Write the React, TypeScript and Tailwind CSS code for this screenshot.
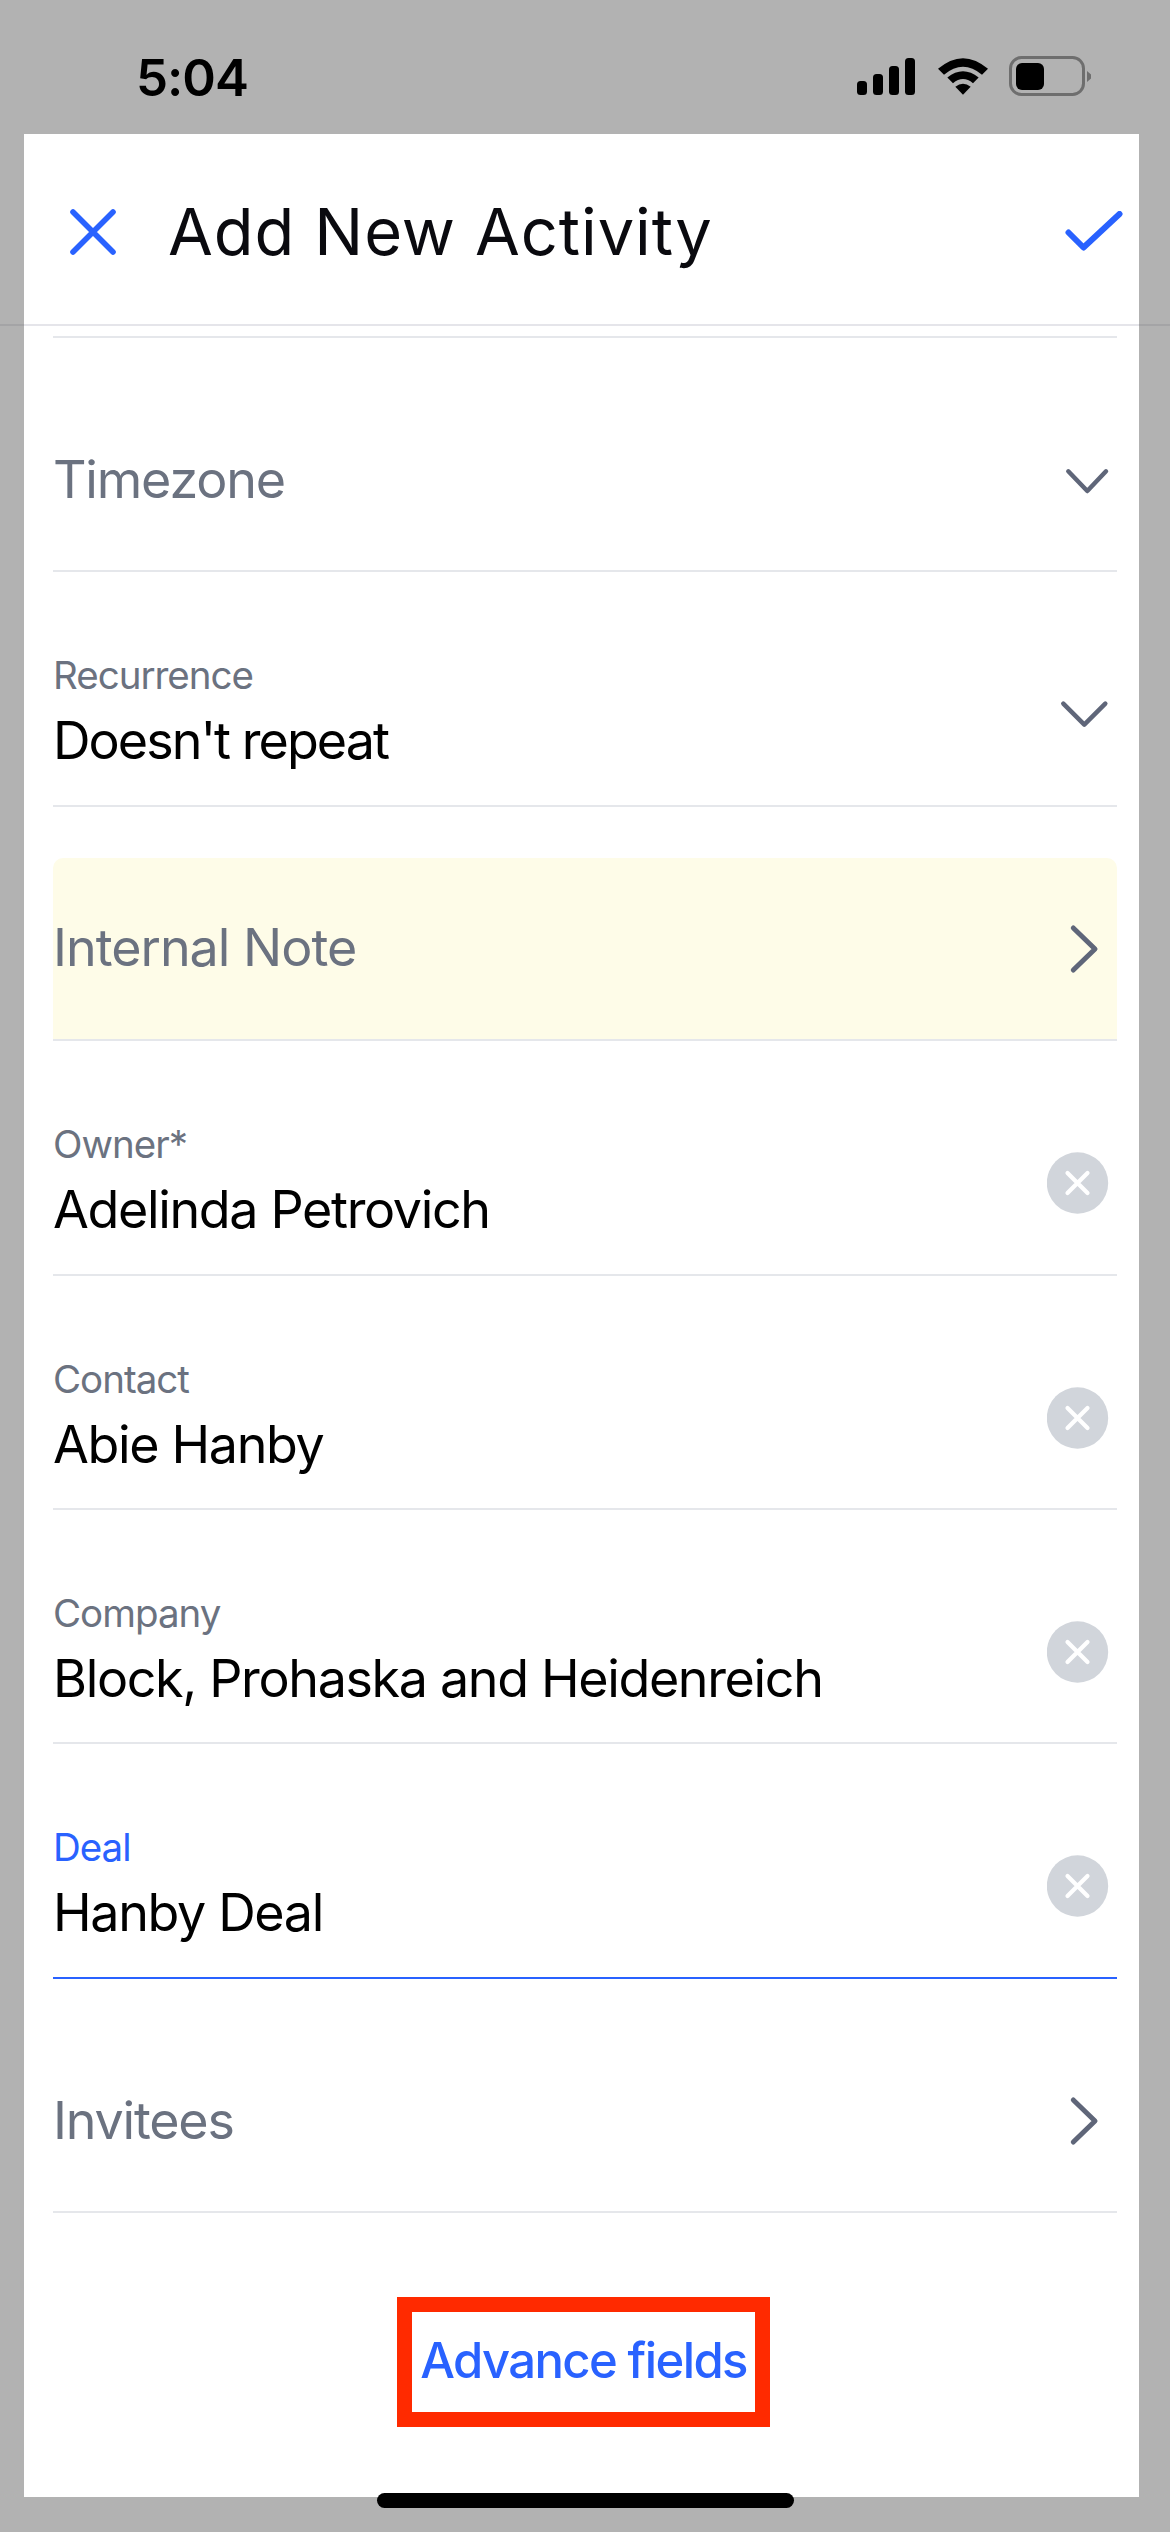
import React from "react";

const font = { fontFamily: "Inter, 'Noto Sans', sans-serif" };

function ChevronDown({ small }: { small?: boolean }) {
  return (
    <svg width="70" height="70" viewBox="0 0 70 70" fill="none" className="shrink-0 mt-[107px]">
      <path d={small ? "M21.3 26.3L40.3 46L59 26.3" : "M16.3 24.7L37.3 45.7L58.3 24.7"} stroke="#5f6679" strokeWidth="4.5" strokeLinecap="round" strokeLinejoin="round" />
    </svg>
  );
}

function ChevronRight() {
  return (
    <svg width="70" height="70" viewBox="0 0 70 70" fill="none" className="shrink-0 mt-[107px]">
      <path d="M26.3 14L48 35L26.3 56" stroke="#5f6679" strokeWidth="5" strokeLinecap="round" strokeLinejoin="round" />
    </svg>
  );
}

function Clear() {
  return (
    <svg width="70" height="70" viewBox="0 0 70 70" fill="none" className="shrink-0 mt-[107px]">
      <circle cx="30.5" cy="35" r="30.7" fill="#d1d5db" />
      <path d="M20.5 25L40.5 45M40.5 25L20.5 45" stroke="#ffffff" strokeWidth="4.2" strokeLinecap="round" />
    </svg>
  );
}

function FieldText({ label, value, focused, tight }: { label: string; value: string; focused?: boolean; tight?: boolean }) {
  return (
    <div className="flex flex-col pt-[79px]">
      <span className={`text-[38.5px] leading-[48px] tracking-[-1px] ${focused ? "text-[#2962ff]" : "text-[#6b7280]"}`}>{label}</span>
      <span className={`mt-[12px] text-[52px] leading-[60px] text-black ${tight ? "tracking-[-1.95px]" : "tracking-[-1.35px]"}`}>{value}</span>
    </div>
  );
}

function Field({ label, value, focused, tight, icon }: { label: string; value: string; focused?: boolean; tight?: boolean; icon: React.ReactNode }) {
  return (
    <div className={`flex h-[234.4px] items-start justify-between border-b-[2px] ${focused ? "border-[#2962ff]" : "border-[#e5e7eb]"}`}>
      <FieldText label={label} value={value} focused={focused} tight={tight} />
      {icon}
    </div>
  );
}

function Placeholder({ text, icon }: { text: string; icon: React.ReactNode }) {
  return (
    <div className="flex h-[234.4px] items-start justify-between border-b-[2px] border-[#e5e7eb]">
      <span className="pt-[112px] text-[52px] leading-[60px] tracking-[-1.2px] text-[#6b7280]">{text}</span>
      {icon}
    </div>
  );
}

export default function App() {
  return (
    <div style={font} className="relative h-[2532px] w-[1170px] overflow-hidden bg-[#b2b2b2]">
      <div className="absolute left-0 right-0 top-[324px] h-[2px] bg-[#a4a4a6]" />

      <div className="relative flex h-[134px] items-start justify-between pl-[136px] pr-[79px] pt-[48px]">
        <span className="text-[51px] font-semibold leading-[60px] tracking-[-1px] text-black">5:04</span>
        <div className="mt-[10px] flex items-start">
          <svg width="58" height="37" viewBox="0 0 58 37" fill="#000">
            <rect x="0" y="23" width="10" height="14" rx="3.5" />
            <rect x="16" y="16" width="10" height="21" rx="3.5" />
            <rect x="32" y="8" width="10" height="29" rx="3.5" />
            <rect x="48" y="0" width="10" height="37" rx="3.5" />
          </svg>
          <svg width="50" height="37" viewBox="0 0 150 110" fill="#000" className="ml-[23px]">
            <path d="M0 32Q75 -32 150 32L132 50Q75 2 18 50Z" />
            <path d="M28 58Q75 20 122 58L105 75Q75 50 45 75Z" />
            <path d="M52 86Q75 68 98 86L75 110Z" />
          </svg>
          <svg width="82" height="41" viewBox="0 0 82 41" fill="none" className="ml-[21px] -mt-[2px]">
            <rect x="1.5" y="1.5" width="73" height="37" rx="11" stroke="#6e6e6e" strokeWidth="3" />
            <rect x="7" y="7" width="28" height="27" rx="6" fill="#000" />
            <path d="M78 15L82 18.5V22.5L78 26Z" fill="#6e6e6e" />
          </svg>
        </div>
      </div>

      <div className="relative ml-[24px] h-[2363px] w-[1115px] bg-white">
        <div className="flex h-[192px] items-center border-b-[2px] border-[#e5e5ea] pl-[46px] pr-[16px] pt-[5px]">
          <svg width="46" height="46" viewBox="0 0 46 46" fill="none" className="shrink-0">
            <path d="M3 3L43 43M43 3L3 43" stroke="#2962ff" strokeWidth="5.6" strokeLinecap="round" />
          </svg>
          <span className="ml-[52px] flex-1 text-[65px] font-normal leading-[76px] tracking-[0.9px] text-[#0a0a0f]">Add New Activity</span>
          <svg width="58" height="42" viewBox="0 0 58 42" fill="none" className="shrink-0">
            <path d="M3.5 21.5L18.5 36.5L54.5 3" stroke="#2962ff" strokeWidth="6" strokeLinecap="round" strokeLinejoin="round" />
          </svg>
        </div>

        <div className="pl-[29px] pr-[22px]">
          <div className="h-[12px] border-b-[2px] border-[#e5e7eb]" />
          <Placeholder text="Timezone" icon={<ChevronDown small />} />
          <Field label="Recurrence" value="Doesn't repeat" tight icon={<ChevronDown />} />
          <div className="flex h-[234.4px] flex-col border-b-[2px] border-[#e5e7eb]">
            <div className="mt-[51px] flex flex-1 items-start justify-between rounded-t-[10px] bg-[#fefce8]">
              <span className="pt-[60px] text-[52px] leading-[60px] tracking-[-1px] text-[#6b7280]">Internal Note</span>
              <div className="-mt-[51px]">
                <ChevronRight />
              </div>
            </div>
          </div>
          <Field label="Owner*" value="Adelinda Petrovich" icon={<Clear />} />
          <Field label="Contact" value="Abie Hanby" icon={<Clear />} />
          <Field label="Company" value="Block, Prohaska and Heidenreich" icon={<Clear />} />
          <Field label="Deal" value="Hanby Deal" focused icon={<Clear />} />
          <Placeholder text="Invitees" icon={<ChevronRight />} />
          <div className="flex justify-center pr-[3px] pt-[84px]">
            <div className="flex h-[130px] w-[373px] items-center justify-center border-[15px] border-[#ff2a00]">
              <span className="whitespace-nowrap pb-[2px] text-[49px] font-medium leading-[60px] tracking-[-1.6px] text-[#2962ff]">Advance fields</span>
            </div>
          </div>
        </div>
      </div>

      <div className="absolute left-[377px] top-[2493px] h-[15px] w-[417px] rounded-full bg-black" />
    </div>
  );
}
